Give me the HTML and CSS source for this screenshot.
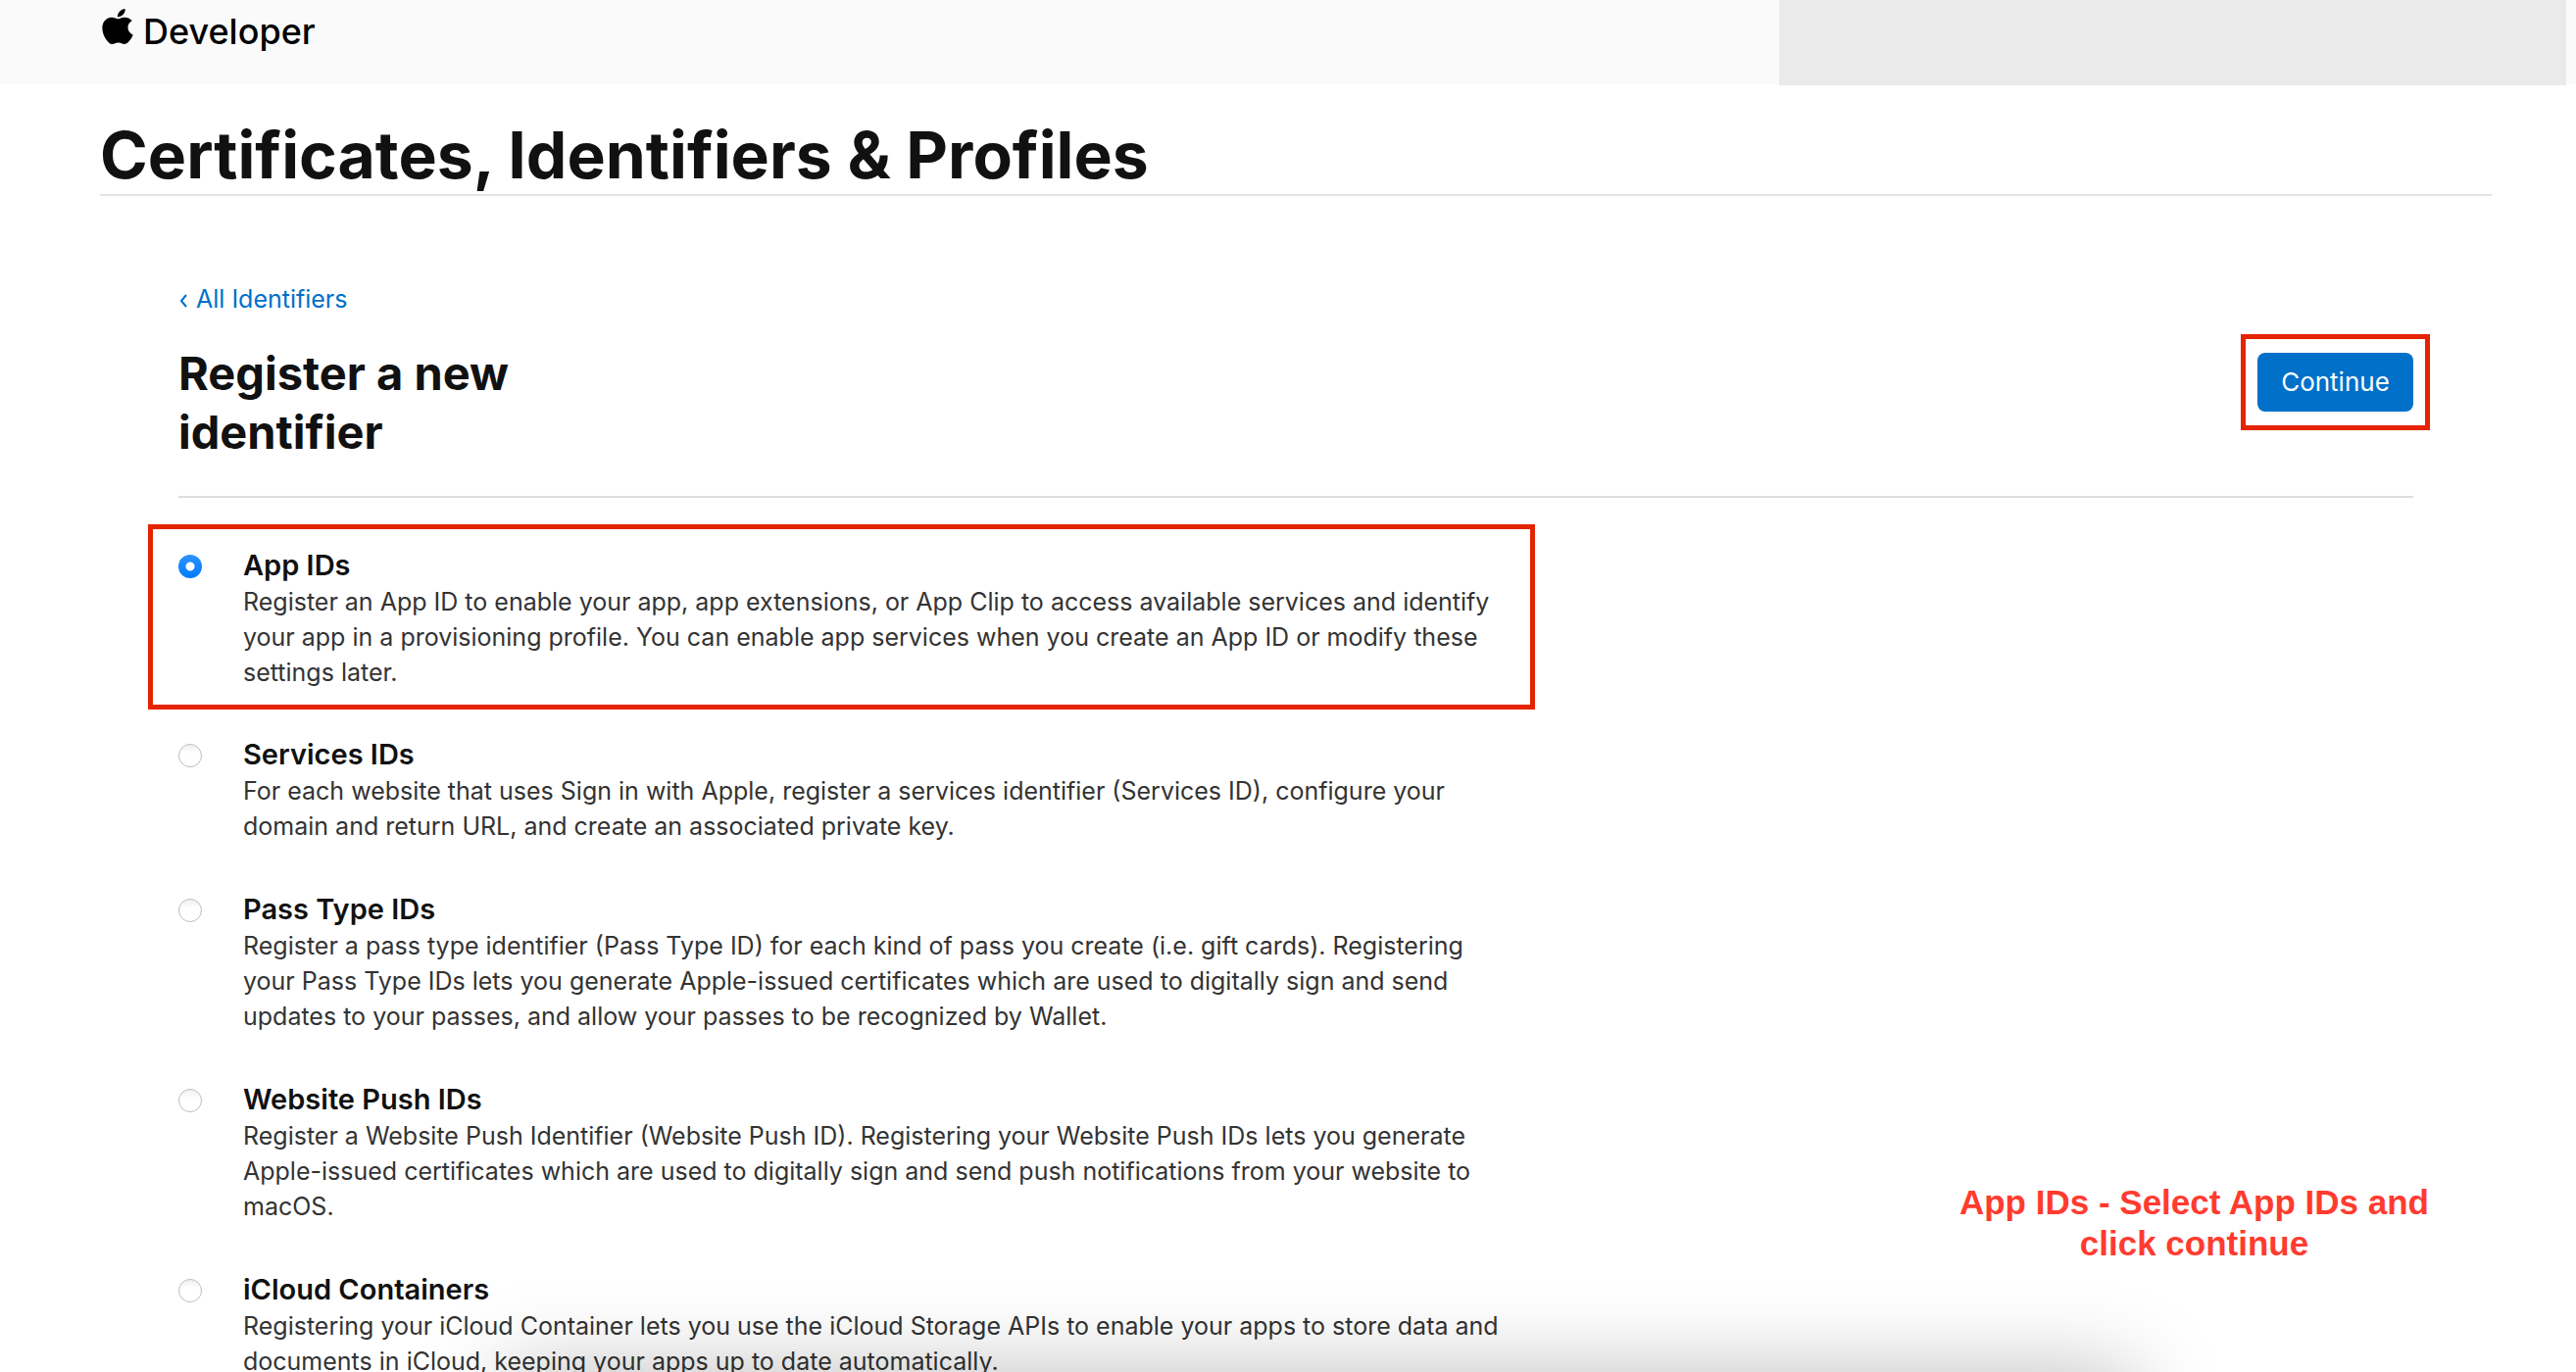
FILE: index.html
```html
<!DOCTYPE html>
<html lang="en">
<head>
<meta charset="utf-8">
<title>Certificates, Identifiers &amp; Profiles - Apple Developer</title>
<link rel="stylesheet" href="styles.css">
</head>
<body>
<header class="topbar">
  <a class="brand" href="#">
    <svg class="brand-logo" viewBox="2 0 20 24" preserveAspectRatio="none" aria-hidden="true"><path d="M12.152 6.896c-.948 0-2.415-1.078-3.96-1.04-2.04.027-3.91 1.183-4.961 3.014-2.117 3.675-.546 9.103 1.519 12.09 1.013 1.454 2.208 3.09 3.792 3.039 1.52-.065 2.09-.987 3.935-.987 1.831 0 2.35.987 3.96.948 1.637-.026 2.676-1.48 3.676-2.948 1.156-1.688 1.636-3.325 1.662-3.415-.039-.013-3.182-1.221-3.22-4.857-.026-3.04 2.48-4.494 2.597-4.559-1.429-2.09-3.623-2.324-4.39-2.376-2-.156-3.675 1.09-4.61 1.09zM15.53 3.83c.843-1.012 1.4-2.427 1.245-3.83-1.207.052-2.662.805-3.532 1.818-.78.896-1.454 2.338-1.273 3.714 1.338.104 2.715-.688 3.559-1.701"/></svg>
    <span>Developer</span>
  </a>
  <div class="account-cover"></div>
</header>
<main class="page">
  <h1 class="page-title">Certificates, Identifiers &amp; Profiles</h1>
  <div class="panel">
    <a class="back-link" href="#"><svg class="chevron" viewBox="0 0 8 14" aria-hidden="true"><path d="M7 1 2 7l5 6"/></svg>All Identifiers</a>
    <div class="panel-head">
      <h2 class="panel-title">Register a new identifier</h2>
      <div class="action">
        <button class="continue" type="button">Continue</button>
      </div>
    </div>
    <form class="options">
      <div class="option highlighted">
        <input class="radio" type="radio" name="kind" id="app-ids" checked>
        <label class="option-text" for="app-ids">
          <span class="option-title">App IDs</span>
          <span class="option-desc">Register an App ID to enable your app, app extensions, or App Clip to access available services and identify<br>your app in a provisioning profile. You can enable app services when you create an App ID or modify these<br>settings later.</span>
        </label>
      </div>
      <div class="option">
        <input class="radio" type="radio" name="kind" id="services-ids">
        <label class="option-text" for="services-ids">
          <span class="option-title">Services IDs</span>
          <span class="option-desc">For each website that uses Sign in with Apple, register a services identifier (Services ID), configure your<br>domain and return URL, and create an associated private key.</span>
        </label>
      </div>
      <div class="option">
        <input class="radio" type="radio" name="kind" id="pass-ids">
        <label class="option-text" for="pass-ids">
          <span class="option-title">Pass Type IDs</span>
          <span class="option-desc">Register a pass type identifier (Pass Type ID) for each kind of pass you create (i.e. gift cards). Registering<br>your Pass Type IDs lets you generate Apple-issued certificates which are used to digitally sign and send<br>updates to your passes, and allow your passes to be recognized by Wallet.</span>
        </label>
      </div>
      <div class="option">
        <input class="radio" type="radio" name="kind" id="push-ids">
        <label class="option-text" for="push-ids">
          <span class="option-title">Website Push IDs</span>
          <span class="option-desc">Register a Website Push Identifier (Website Push ID). Registering your Website Push IDs lets you generate<br>Apple-issued certificates which are used to digitally sign and send push notifications from your website to<br>macOS.</span>
        </label>
      </div>
      <div class="option">
        <input class="radio" type="radio" name="kind" id="icloud">
        <label class="option-text" for="icloud">
          <span class="option-title">iCloud Containers</span>
          <span class="option-desc">Registering your iCloud Container lets you use the iCloud Storage APIs to enable your apps to store data and<br>documents in iCloud, keeping your apps up to date automatically.</span>
        </label>
      </div>
    </form>
  </div>
</main>
<p class="note">App IDs - Select App IDs and<br>click continue</p>
<div class="window-shadow"></div>
</body>
</html>
```
FILE: styles.css
```css
* { box-sizing: border-box; }

body {
  margin: 0;
  position: relative;
  height: 100vh;
  overflow: hidden;
  background: #fff;
  color: #111;
  font-family: Inter, "Noto Sans", sans-serif;
}

.topbar {
  display: flex;
  justify-content: space-between;
  height: 86px;
  padding: 0 10px 0 104px;
  background: #fafafa;
}

.brand {
  display: flex;
  gap: 10px;
  height: 64px;
  align-items: center;
  color: #000;
  font-size: 36px;
  font-weight: 500;
  text-decoration: none;
}

.brand-logo {
  width: 32px;
  height: 36px;
  margin-bottom: 10px;
}

.account-cover {
  width: 803px;
  height: 87px;
  background: #eaeaea;
}

.page { padding: 32px 86px 0 102px; }

.page-title {
  margin: 0;
  height: 82px;
  border-bottom: 2px solid #e3e3e3;
  font-size: 66px;
  font-weight: 700;
  line-height: 80px;
}

.panel { padding: 87px 80px 0; }

.back-link {
  display: flex;
  align-items: center;
  gap: 8px;
  color: #0070c9;
  font-size: 25px;
  line-height: 36px;
  text-decoration: none;
}

.chevron {
  width: 10px;
  height: 14px;
  margin-top: 4px;
  fill: none;
  stroke: currentColor;
  stroke-width: 2;
}

.panel-head {
  display: flex;
  justify-content: space-between;
  align-items: flex-start;
  padding: 28px 0 35px;
  border-bottom: 2px solid #ddd;
}

.panel-title {
  margin: 0;
  width: 400px;
  font-size: 47px;
  font-weight: 700;
  line-height: 60px;
}

.action {
  margin: -10px -17px 0 0;
  padding: 14px 12px;
  border: 5px solid #e42300;
}

.continue {
  display: block;
  width: 159px;
  height: 60px;
  padding: 0 0 2px;
  border: 0;
  border-radius: 8px;
  background: #0070c9;
  color: #fff;
  font: 26px Inter, sans-serif;
}

.options {
  display: flex;
  flex-direction: column;
  gap: 48px;
  padding-top: 50px;
}

.option {
  display: flex;
  gap: 42px;
  align-items: flex-start;
}

.highlighted {
  width: 1415px;
  margin: -23px 0 -21px -31px;
  padding: 18px 0 15px 26px;
  border: 5px solid #e42300;
}

.radio {
  appearance: none;
  width: 24px;
  height: 24px;
  margin: 8px 0 0;
  flex: none;
  border: 1px solid #bdbdbd;
  border-radius: 50%;
  background: linear-gradient(#f0f0f0, #fff 40%);
}

.radio:checked {
  border: 0;
  background: radial-gradient(circle, #fff 4px, transparent 5px), linear-gradient(#2f92ff, #007aff);
}

.option-title {
  display: block;
  font-size: 29px;
  font-weight: 600;
  line-height: 38px;
}

.option-desc {
  display: block;
  color: #333;
  font-size: 25px;
  line-height: 36px;
  white-space: nowrap;
}

.note {
  position: absolute;
  right: 150px;
  bottom: 110px;
  margin: 0;
  color: #ff3b30;
  font-family: "Liberation Sans", Arial, sans-serif;
  font-size: 35px;
  font-weight: 700;
  line-height: 42px;
  text-align: center;
}

.window-shadow {
  position: absolute;
  left: 510px;
  right: 450px;
  top: 100%;
  height: 200px;
  border-radius: 20px;
  box-shadow: 0 0 90px rgba(0, 0, 0, .26);
  pointer-events: none;
}
```
